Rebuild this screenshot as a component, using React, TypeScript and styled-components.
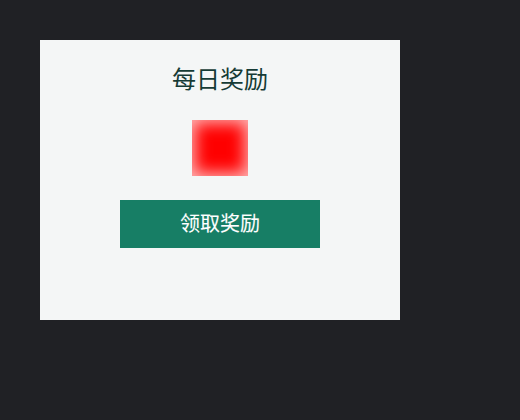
import styled, { createGlobalStyle } from "styled-components";

const GlobalStyle = createGlobalStyle`
  html, body {
    margin: 0;
    height: 100%;
    background: #202125;
  }
`;

const App = () => {
  return (
    <>
      <GlobalStyle />
      <Page>
        <Card>
          <Title>每日奖励</Title>
          <RewardIcon />
          <ClaimButton>领取奖励</ClaimButton>
        </Card>
      </Page>
    </>
  );
};

const Page = styled.div`
  padding: 40px;
  font-family: "Noto Sans CJK SC", "Liberation Sans", sans-serif;
`;
const Card = styled.div`
  display: flex;
  flex-direction: column;
  align-items: center;
  width: 360px;
  height: 280px;
  padding-top: 20px;
  box-sizing: border-box;
  background: #f4f6f6;
`;
const Title = styled.div`
  height: 40px;
  line-height: 36px;
  font-size: 24px;
  color: #163b35;
`;
const RewardIcon = styled.div`
  width: 56px;
  height: 56px;
  margin-top: 20px;
  background: #ff0000;
  box-shadow: inset 0 0 16px 3px rgba(255, 255, 255, 0.72);
`;
const ClaimButton = styled.button`
  width: 200px;
  height: 48px;
  margin-top: 24px;
  padding: 0 0 4px;
  border: none;
  background: #177e65;
  color: #ffffff;
  font-family: inherit;
  font-size: 20px;
  -webkit-text-stroke: 0.1px #ffffff;
`;

export default App;
